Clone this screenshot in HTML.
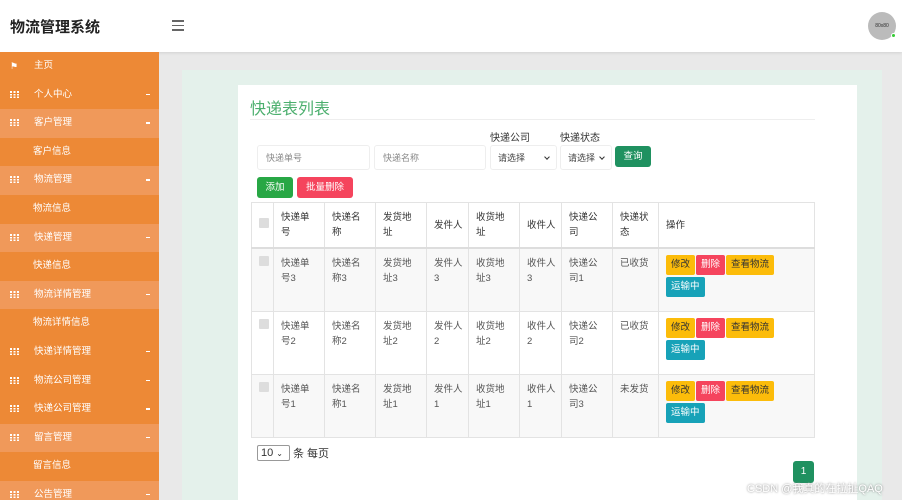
<!DOCTYPE html>
<html><head><meta charset="utf-8"><style>
*{box-sizing:border-box;margin:0;padding:0}
html,body{width:902px;height:500px;overflow:hidden}
body{background:#e9e9e9;font-family:"Liberation Sans","Noto Sans CJK SC",sans-serif;position:relative;color:#333}
.hdr{position:absolute;left:0;top:0;width:902px;height:52px;background:#fff;box-shadow:0 1px 3px rgba(0,0,0,.1)}
.logo{position:absolute;left:10px;top:16px;font-size:15px;font-weight:bold;color:#222}
.burger{position:absolute;left:172px;top:20px;width:12px}
.burger i{display:block;height:1.5px;background:#666;margin-bottom:3px}
.av{position:absolute;left:868px;top:12px;width:28px;height:28px;border-radius:50%;background:#bbb;font-size:5px;text-align:center;line-height:28px;color:#333}
.dot{position:absolute;left:891px;top:33px;width:5px;height:5px;border-radius:50%;background:#3c3;border:1px solid #fff}
.side{position:absolute;left:0;top:52px;width:159px;height:448px;background:#ed8936;overflow:hidden}
.it{height:28.6px;line-height:28.6px;font-size:9.5px;color:#fff;position:relative;padding-left:34px}
.it.l{background:#f0995a}
.it.s{padding-left:33px}
.it .ic{position:absolute;left:10px;top:10px;width:9px;height:7px;background:repeating-linear-gradient(90deg,#fff 0 2px,transparent 2px 3.5px);}
.it .ic:after{content:"";position:absolute;inset:0;background:repeating-linear-gradient(0deg,transparent 0 1.6px,#ed8936 1.6px 2.6px)}
.it.l .ic:after{background:repeating-linear-gradient(0deg,transparent 0 1.6px,#f0995a 1.6px 2.6px)}
.it .ar{position:absolute;left:146px;top:13px;width:4px;height:1.5px;background:#fff}
.green{position:absolute;left:182px;top:70px;width:700px;height:430px;background:#e4f1eb}
.card{position:absolute;left:238px;top:85px;width:619px;height:415px;background:#fff}
.title{position:absolute;left:250px;top:95px;font-size:16px;color:#4caf6e}
.hr{position:absolute;left:250px;top:119px;width:565px;height:1px;background:#eee}
.inp{position:absolute;top:145px;height:25px;border:1px solid #eee;border-radius:3px;font-size:9px;color:#888;padding:0 8px;line-height:24px}
.sel{position:absolute;top:145px;height:25px;border:1px solid #eee;border-radius:3px;font-size:9px;color:#444;padding:0 7px;line-height:24px}
.sel:after{content:"";position:absolute;right:7px;top:9px;width:3px;height:3px;border-right:1.2px solid #333;border-bottom:1.2px solid #333;transform:rotate(45deg)}
.lbl{position:absolute;top:129px;font-size:10px;color:#333}
.btn{position:absolute;font-size:9.5px;color:#fff;border-radius:3px;text-align:center}
table{position:absolute;left:251px;top:202px;width:564px;border-collapse:collapse;font-size:9.5px;color:#555;table-layout:fixed}
td,th{border:1px solid #e3e3e3;vertical-align:top;padding:7px 7px;text-align:left;line-height:15px;font-weight:normal;white-space:nowrap;overflow:visible}
th{vertical-align:middle;color:#333;height:43px;border-bottom:2px solid #ddd}
tr.g td{background:#f8f8f8}
tbody td{height:63px}
td.op{padding-top:5px}
.cb{display:inline-block;width:10px;height:10px;background:#ddd;border-radius:1px}
.b{display:inline-block;font-size:9.5px;padding:0 5px;height:20px;line-height:20px;border-radius:2px;margin:1px 1px 1px 0}
.y{background:#fcbc0a;color:#333}.r{background:#f5445d;color:#fff}.c{background:#17a2b8;color:#fff}
</style></head><body>
<div class="hdr"><div class="logo">物流管理系统</div><div class="burger"><i></i><i></i><i></i></div><div class="av">80x80</div><div class="dot"></div></div>
<div class="side">
<div class="it"><span style="position:absolute;left:10px;top:0;font-size:9px">⚑</span>主页</div>
<div class="it"><span class="ic"></span>个人中心<span class="ar"></span></div>
<div class="it l"><span class="ic"></span>客户管理<span class="ar"></span></div>
<div class="it s">客户信息</div>
<div class="it l"><span class="ic"></span>物流管理<span class="ar"></span></div>
<div class="it s">物流信息</div>
<div class="it l"><span class="ic"></span>快递管理<span class="ar"></span></div>
<div class="it s">快递信息</div>
<div class="it l"><span class="ic"></span>物流详情管理<span class="ar"></span></div>
<div class="it s">物流详情信息</div>
<div class="it"><span class="ic"></span>快递详情管理<span class="ar"></span></div>
<div class="it"><span class="ic"></span>物流公司管理<span class="ar"></span></div>
<div class="it"><span class="ic"></span>快递公司管理<span class="ar"></span></div>
<div class="it l"><span class="ic"></span>留言管理<span class="ar"></span></div>
<div class="it s">留言信息</div>
<div class="it l"><span class="ic"></span>公告管理<span class="ar"></span></div>
</div>
<div class="green"></div>
<div class="card"></div>
<div class="title">快递表列表</div><div class="hr"></div>
<div class="inp" style="left:257px;width:113px">快递单号</div>
<div class="inp" style="left:374px;width:112px">快递名称</div>
<div class="lbl" style="left:490px">快递公司</div>
<div class="lbl" style="left:560px">快递状态</div>
<div class="sel" style="left:490px;width:67px">请选择</div>
<div class="sel" style="left:560px;width:52px">请选择</div>
<div class="btn" style="left:615px;top:146px;width:36px;height:21px;line-height:21px;background:#1f9160">查询</div>
<div class="btn" style="left:257px;top:177px;width:36px;height:21px;line-height:21px;background:#28a745">添加</div>
<div class="btn" style="left:297px;top:177px;width:56px;height:21px;line-height:21px;background:#f5445d">批量删除</div>
<table>
<colgroup><col style="width:22px"><col style="width:51px"><col style="width:51px"><col style="width:51px"><col style="width:42px"><col style="width:51px"><col style="width:42px"><col style="width:51px"><col style="width:46px"><col></colgroup>
<thead><tr><th><span class="cb"></span></th><th>快递单<br>号</th><th>快递名<br>称</th><th>发货地<br>址</th><th>发件人</th><th>收货地<br>址</th><th>收件人</th><th>快递公<br>司</th><th>快递状<br>态</th><th>操作</th></tr></thead>
<tbody>
<tr class="g"><td><span class="cb"></span></td><td>快递单<br>号3</td><td>快递名<br>称3</td><td>发货地<br>址3</td><td>发件人<br>3</td><td>收货地<br>址3</td><td>收件人<br>3</td><td>快递公<br>司1</td><td>已收货</td><td class="op"><span class="b y">修改</span><span class="b r">删除</span><span class="b y">查看物流</span><br><span class="b c">运输中</span></td></tr>
<tr><td><span class="cb"></span></td><td>快递单<br>号2</td><td>快递名<br>称2</td><td>发货地<br>址2</td><td>发件人<br>2</td><td>收货地<br>址2</td><td>收件人<br>2</td><td>快递公<br>司2</td><td>已收货</td><td class="op"><span class="b y">修改</span><span class="b r">删除</span><span class="b y">查看物流</span><br><span class="b c">运输中</span></td></tr>
<tr class="g"><td><span class="cb"></span></td><td>快递单<br>号1</td><td>快递名<br>称1</td><td>发货地<br>址1</td><td>发件人<br>1</td><td>收货地<br>址1</td><td>收件人<br>1</td><td>快递公<br>司3</td><td>未发货</td><td class="op"><span class="b y">修改</span><span class="b r">删除</span><span class="b y">查看物流</span><br><span class="b c">运输中</span></td></tr>
</tbody></table>
<div style="position:absolute;left:257px;top:445px;width:33px;height:16px;border:1px solid #999;border-radius:2px;font-size:11px;padding:0 3px;line-height:14px">10 <span style="font-size:8px">⌄</span></div>
<div style="position:absolute;left:293px;top:445px;font-size:11px;color:#333">条 每页</div>
<div class="btn" style="left:793px;top:461px;width:21px;height:22px;line-height:22px;background:#1f9160;font-size:10px">1</div>
<div style="position:absolute;left:747px;top:480px;font-size:11px;color:#fff;text-shadow:0 0 2px #777">CSDN @我真的在拉扯QAQ</div>
</body></html>
